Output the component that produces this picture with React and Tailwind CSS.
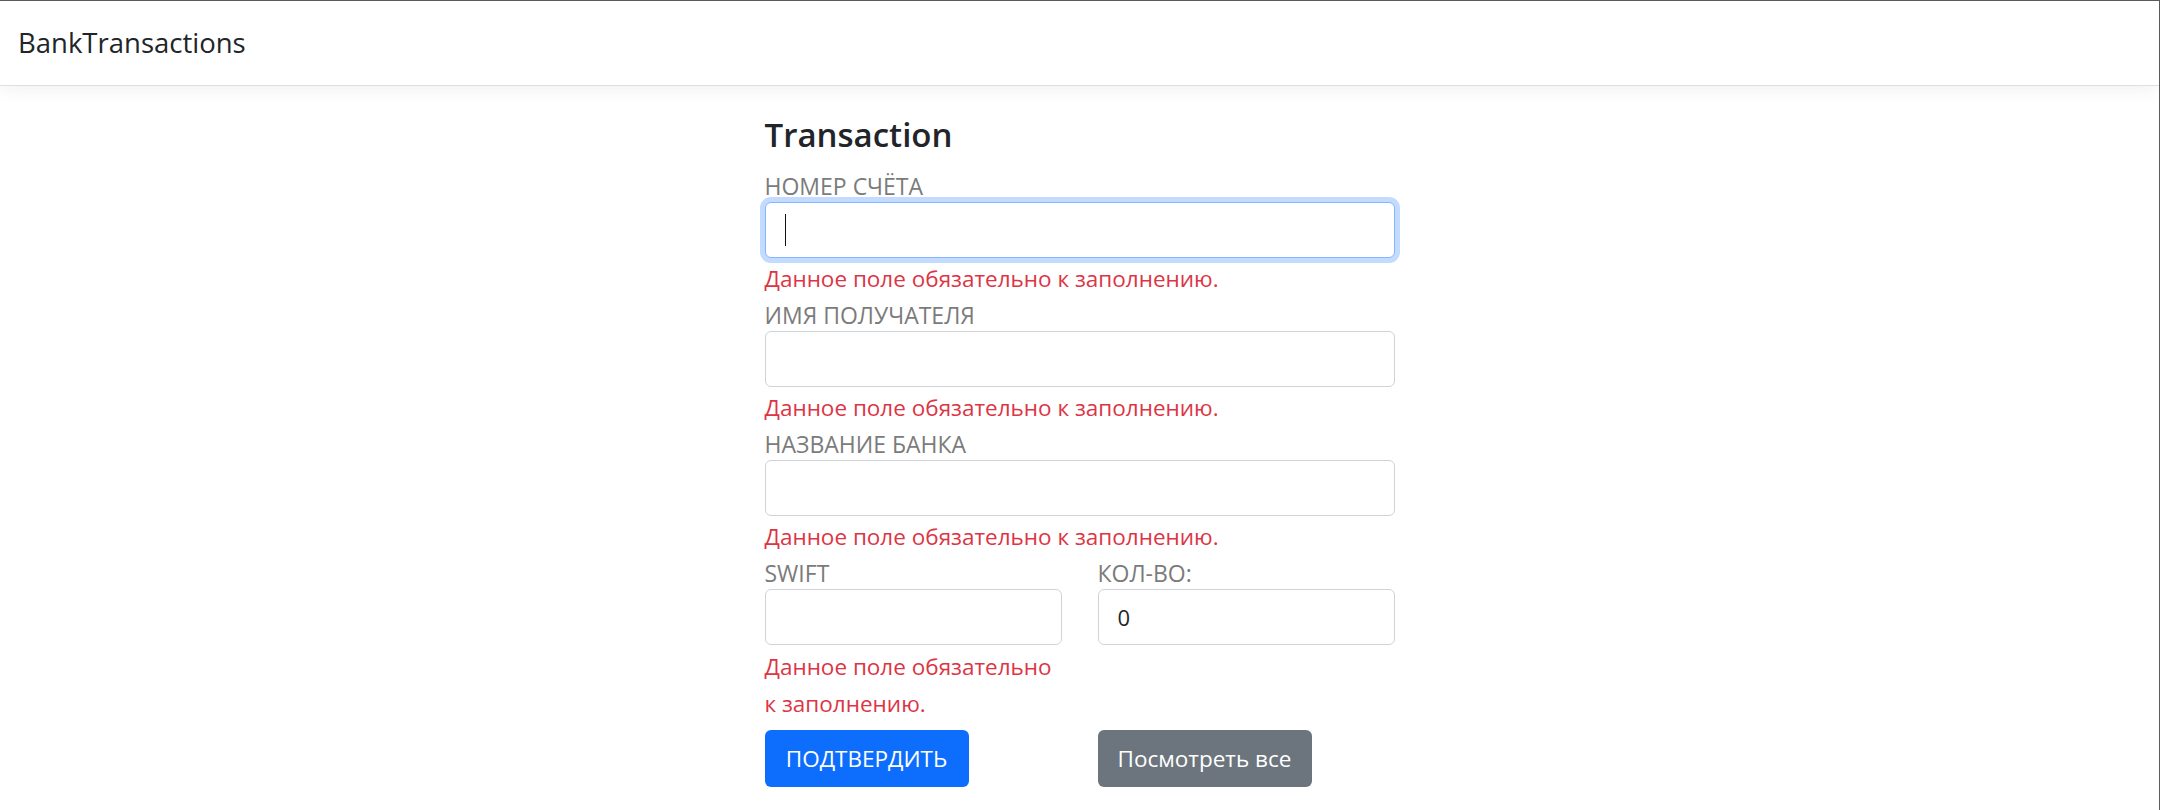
const Label = ({ children }) => (
  <div className="h-[30px] leading-[30px] text-[23px] text-[#7b7b7b] uppercase">{children}</div>
);

const Input = ({ value, focused, className = '' }) => (
  <div
    className={
      'relative mt-px h-[56px] rounded-[6px] border bg-white px-[19px] flex items-center text-[22px] text-[#212529] ' +
      (focused
        ? 'border-[#86b7fe] shadow-[0_0_0_5px_rgba(13,110,253,0.25)] '
        : 'border-[#ced4da] ') +
      className
    }
  >
    {focused && <span className="block w-px h-[32px] bg-[#111]" />}
    {value}
  </div>
);

const Error = ({ children }) => (
  <div className="h-[42px] leading-[42px] text-[22.5px] text-[#dc3545]">{children}</div>
);

const Field = ({ label, focused }) => (
  <div>
    <Label>{label}</Label>
    <Input focused={focused} />
    <Error>Данное поле обязательно к заполнению.</Error>
  </div>
);

export default function App() {
  return (
    <div className="min-h-screen bg-white border-t border-r border-[#5c5c5c] font-['Open_Sans',sans-serif]">
      <nav className="h-[85px] border-b border-[#e0dde6] shadow-[0_5px_16px_rgba(0,0,0,0.05)] flex items-center px-[18px]">
        <span className="text-[27.5px] text-[#212529]">BankTransactions</span>
      </nav>

      <main className="w-[630px] mx-auto pt-[26px]">
        <h3 className="h-[46px] leading-[46px] text-[33px] font-semibold text-[#212529]">Transaction</h3>

        <div className="mt-[13px]">
          <Field label="Номер счёта" focused />
          <Field label="Имя получателя" />
          <Field label="Название банка" />

          <div className="grid grid-cols-2 gap-x-[36px]">
            <div>
              <Label>SWIFT</Label>
              <Input />
              <div className="pt-[3px] leading-[37px] text-[22.5px] text-[#dc3545]">
                Данное поле обязательно к заполнению.
              </div>
            </div>
            <div>
              <Label>Кол-во:</Label>
              <Input value="0" />
            </div>
          </div>

          <div className="grid grid-cols-2 gap-x-[36px] mt-[8px]">
            <div>
              <button className="w-[204px] h-[57px] rounded-[6px] bg-[#0d6efd] text-white text-[22.5px]">
                ПОДТВЕРДИТЬ
              </button>
            </div>
            <div>
              <button className="w-[214px] h-[57px] rounded-[6px] bg-[#6c757d] text-white text-[22.5px]">
                Посмотреть все
              </button>
            </div>
          </div>
        </div>
      </main>
    </div>
  );
}
